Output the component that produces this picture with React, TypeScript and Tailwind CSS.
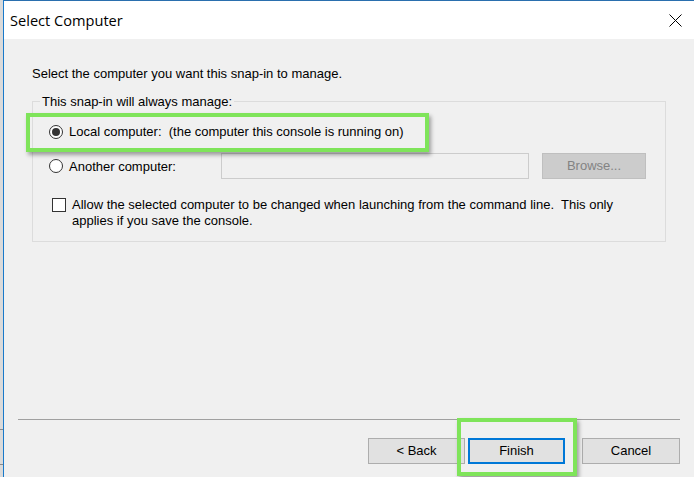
export default function App() {
  return (
    <div className="relative flex h-[477px] w-[694px] overflow-hidden bg-[#f0f0f0] font-['Liberation_Sans',Arial,sans-serif] text-[13px] text-black">
      {/* Desktop strip behind the dialog */}
      <div className="flex w-[3px] flex-col bg-[#dadada]">
        <div className="h-[429px]" />
        <div className="h-px bg-[#8a8a8a]" />
        <div className="h-[34px]" />
        <div className="h-px bg-[#8a8a8a]" />
      </div>

      {/* Dialog window */}
      <div className="flex flex-1 flex-col border-l border-[#1979ca]">
        {/* Title bar */}
        <div className="flex h-[39px] items-center justify-between border-t border-[#2a6fae] bg-white pl-[6px] pr-[12px]">
          <span className="mt-[1px] font-['Open_Sans',sans-serif] text-[14.6px] leading-none text-black">Select Computer</span>
          <svg width="13" height="13" viewBox="0 0 13 13" className="mt-[1px]">
            <path d="M0.5 0.5 L12.5 12.5 M12.5 0.5 L0.5 12.5" stroke="#000" strokeWidth="1" />
          </svg>
        </div>

        {/* Body */}
        <div className="relative flex flex-1 flex-col">
          <p className="ml-[28px] mt-[27px] leading-[15px]">Select the computer you want this snap-in to manage.</p>

          <fieldset className="ml-[28px] mr-[28px] mt-[13px] h-[148px] border border-[#dcdcdc] px-0 pb-0">
            <legend className="ml-[7px] px-[2px] leading-[15px]">This snap-in will always manage:</legend>

            {/* Local computer */}
            <div className="ml-[16px] mt-[15px] flex items-center">
              <span className="flex h-[14px] w-[14px] items-center justify-center rounded-full border border-[#333] bg-white">
                <span className="h-[8px] w-[8px] rounded-full bg-[#333]" />
              </span>
              <span className="ml-[6px] leading-[15px]">Local computer:&nbsp; (the computer this console is running on)</span>
            </div>

            {/* Another computer */}
            <div className="mt-[14px] flex items-center">
              <div className="ml-[16px] flex w-[172px] items-center">
                <span className="h-[14px] w-[14px] rounded-full border border-[#333] bg-white" />
                <span className="ml-[6px] leading-[15px]">Another computer:</span>
              </div>
              <div className="h-[26px] w-[308px] border border-[#cccccc] bg-[#f0f0f0]" />
              <div className="ml-[13px] flex h-[26px] w-[104px] items-center justify-center border border-[#bfbfbf] bg-[#cccccc] text-[#838383]">
                Browse...
              </div>
            </div>

            {/* Checkbox */}
            <div className="ml-[19px] mt-[18px] flex items-start">
              <span className="mt-[1px] h-[14px] w-[14px] shrink-0 border border-[#333] bg-white" />
              <p className="ml-[6px] w-[560px] leading-[16px]">
                Allow the selected computer to be changed when launching from the command line.&nbsp; This only applies if you save the console.
              </p>
            </div>
          </fieldset>

          <div className="flex-1" />

          {/* Separator */}
          <div className="ml-[14px] mr-[14px] h-px bg-[#a0a0a0]" />

          {/* Buttons */}
          <div className="mb-[13px] mr-[14px] mt-[18px] flex justify-end">
            <button className="h-[26px] w-[97px] border border-[#adadad] bg-[#e1e1e1]">&lt; Back</button>
            <button className="ml-[3px] h-[26px] w-[97px] border-2 border-[#0078d7] bg-[#e1e1e1]">Finish</button>
            <button className="ml-[17px] h-[26px] w-[98px] border border-[#adadad] bg-[#e1e1e1]">Cancel</button>
          </div>
        </div>
      </div>

      {/* Green highlight annotations */}
      <div className="pointer-events-none absolute left-[26px] top-[113px] h-[39px] w-[403px] border-4 border-[#7fe45a] shadow-[2px_3px_4px_rgba(0,0,0,0.35)]" />
      <div className="pointer-events-none absolute left-[457px] top-[418px] h-[58px] w-[120px] border-4 border-[#7fe45a] shadow-[2px_3px_4px_rgba(0,0,0,0.35)]" />
    </div>
  );
}
